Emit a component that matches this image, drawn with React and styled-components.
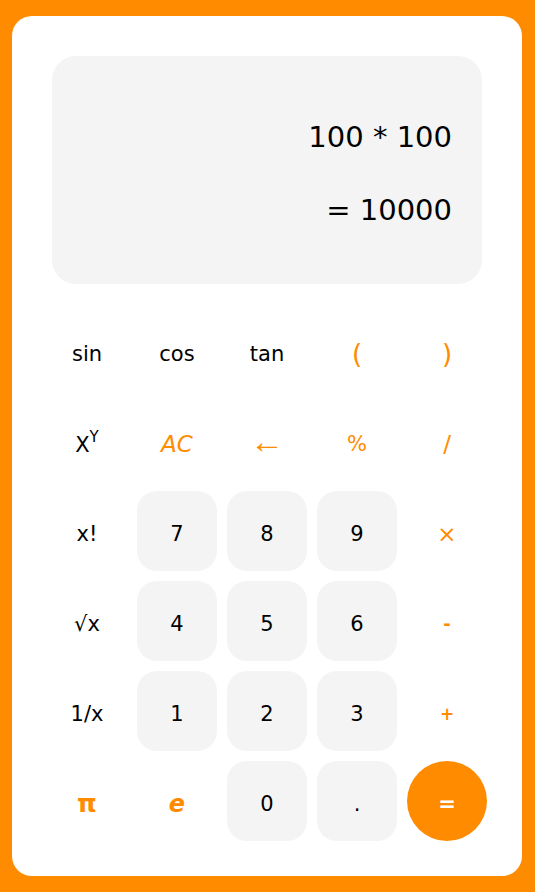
import React from "react";
import styled, { createGlobalStyle } from "styled-components";

const Global = createGlobalStyle`
  html, body { margin: 0; padding: 0; background: #ff8c00; }
  body { font-family: "Comic Sans MS", "DejaVu Sans", sans-serif; }
`;

const Page = styled.div`
  box-sizing: border-box;
  width: 535px;
  height: 892px;
  padding: 16px 13px 16px 12px;
  background: #ff8c00;
`;

const Card = styled.div`
  box-sizing: border-box;
  height: 860px;
  background: #fff;
  border-radius: 20px;
  padding: 40px 35px 35px;
  display: flex;
  flex-direction: column;
  align-items: center;
`;

const Display = styled.div`
  box-sizing: border-box;
  width: 430px;
  height: 230px;
  background: #f4f4f4;
  border-radius: 24px;
  padding: 6px 30px 0;
  display: flex;
  flex-direction: column;
  justify-content: center;
  align-items: flex-end;
  gap: 31px;
  font-size: 29px;
  color: #000;
`;

const Line = styled.div`
  line-height: 42px;
`;

const Grid = styled.div`
  margin-top: 27px;
  display: grid;
  grid-template-columns: repeat(5, 80px);
  grid-auto-rows: 80px;
  gap: 10px;
  width: 440px;
  margin-left: -5px;
  margin-right: -5px;
`;

const Key = styled.button`
  border: none;
  margin: 0;
  padding: ${(p) => p.$pad ?? 5}px 0 0;
  font-family: ${(p) => p.$font || "inherit"};
  font-size: ${(p) => p.$size || 21}px;
  font-style: ${(p) => (p.$italic ? "italic" : "normal")};
  color: ${(p) => (p.$kind === "eq" ? "#fff" : p.$kind === "op" ? "#ff8c00" : "#000")};
  background: ${(p) =>
    p.$kind === "eq" ? "#ff8c00" : p.$kind === "num" ? "#f4f4f4" : "transparent"};
  border-radius: ${(p) => (p.$kind === "eq" ? "50%" : "20px")};
  display: flex;
  align-items: center;
  justify-content: center;
  font-weight: ${(p) => (p.$bold ? 700 : 400)};
`;

const Sup = styled.sup`
  font-size: 15px;
  position: relative;
  top: -2px;
`;

const thin = '"Liberation Sans", "DejaVu Sans", sans-serif';

const keys = [
  { t: "sin" }, { t: "cos" }, { t: "tan" }, { t: "(", k: "op", s: 26 }, { t: ")", k: "op", s: 26 },
  { t: "xy" }, { t: "AC", k: "op", i: true, s: 23 }, { t: "←", k: "op", s: 34, f: thin, p: 0 }, { t: "%", k: "op" }, { t: "/", k: "op", s: 23 },
  { t: "x!" }, { t: "7", k: "num" }, { t: "8", k: "num" }, { t: "9", k: "num" }, { t: "×", k: "op", s: 23 },
  { t: "√x" }, { t: "4", k: "num" }, { t: "5", k: "num" }, { t: "6", k: "num" }, { t: "-", k: "op", b: true, s: 18 },
  { t: "1/x" }, { t: "1", k: "num" }, { t: "2", k: "num" }, { t: "3", k: "num" }, { t: "+", k: "op", b: true, s: 17 },
  { t: "π", k: "op", b: true, s: 25 }, { t: "e", k: "op", i: true, b: true, s: 24 }, { t: "0", k: "num" }, { t: ".", k: "num" }, { t: "=", k: "eq", b: true },
];

export default function App() {
  return (
    <>
      <Global />
      <Page>
        <Card>
          <Display>
            <Line>100 * 100</Line>
            <Line>= 10000</Line>
          </Display>
          <Grid>
            {keys.map((key, idx) => (
              <Key
                key={idx}
                $kind={key.k}
                $italic={key.i}
                $bold={key.b}
                $size={key.s}
                $font={key.f}
                $pad={key.p}
              >
                {key.t === "xy" ? (
                  <span>
                    X<Sup>Y</Sup>
                  </span>
                ) : (
                  key.t
                )}
              </Key>
            ))}
          </Grid>
        </Card>
      </Page>
    </>
  );
}
